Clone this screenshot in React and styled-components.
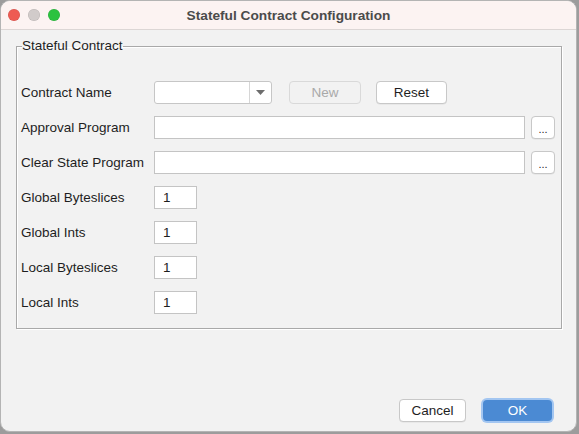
import React from "react";
import styled, { createGlobalStyle } from "styled-components";

const Global = createGlobalStyle`
  html, body {
    margin: 0;
    padding: 0;
    background: #9c9c9c;
    font-family: "Liberation Sans", Arial, sans-serif;
    font-size: 13.5px;
    color: #1e1e1e;
  }
`;

const Window = styled.div`
  width: 577px;
  height: 432px;
  box-sizing: border-box;
  border: 1px solid #b4b4b4;
  border-radius: 10px;
  overflow: hidden;
  background: #f2f2f2;
  display: flex;
  flex-direction: column;
`;

const TitleBar = styled.div`
  height: 28px;
  flex: none;
  background: #fcf3f2;
  border-bottom: 1px solid #dcd6d5;
  display: flex;
  align-items: center;
  position: relative;
  padding-left: 7px;
  gap: 8px;
`;

const Light = styled.span`
  width: 12px;
  height: 12px;
  border-radius: 50%;
  background: ${(p) => p.color};
  box-shadow: inset 0 0 0 0.5px rgba(0, 0, 0, 0.12);
`;

const Title = styled.div`
  position: absolute;
  left: 0;
  right: 0;
  text-align: center;
  font-weight: bold;
  font-size: 13.7px;
  color: #4b4b4b;
  pointer-events: none;
`;

const Content = styled.div`
  flex: 1;
  display: flex;
  flex-direction: column;
  padding: 8px 14px 8px 15px;
`;

const Group = styled.fieldset`
  margin: 0;
  padding: 27px 6px 14px 4px;
  border: 1px solid #a9a9a9;
  box-shadow: 1px 1px 0 #ffffff, inset 1px 1px 0 #ffffff;
  display: flex;
  flex-direction: column;
  gap: 12px;
`;

const Legend = styled.legend`
  padding: 0;
  margin-left: 1px;
  font-size: 13.5px;
  line-height: 16px;
  color: #1e1e1e;
`;

const Row = styled.div`
  display: flex;
  align-items: center;
  height: 23px;
`;

const Label = styled.span`
  width: 133px;
  flex: none;
`;

const Field = styled.div`
  box-sizing: border-box;
  height: 23px;
  width: ${(p) => (p.$w ? `${p.$w}px` : "auto")};
  flex: ${(p) => (p.$w ? "none" : "1")};
  background: #fff;
  border: 1px solid #c4c4c4;
  padding-left: 8px;
  display: flex;
  align-items: center;
`;

const Combo = styled.div`
  box-sizing: border-box;
  width: 118px;
  height: 23px;
  background: #fff;
  border: 1px solid #c6c6c6;
  border-radius: 3px;
  display: flex;
`;

const ComboArrow = styled.div`
  margin-left: auto;
  width: 21px;
  border-left: 1px solid #d6d6d6;
  display: flex;
  align-items: center;
  justify-content: center;
`;

const Button = styled.button`
  box-sizing: border-box;
  height: 23px;
  width: ${(p) => p.$w}px;
  margin-left: ${(p) => p.$ml || 0}px;
  padding: 0;
  font-family: inherit;
  font-size: 13.5px;
  border-radius: 4px;
  border: 1px solid ${(p) => (p.disabled ? "#d9d9d9" : "#c8c8c8")};
  background: ${(p) => (p.disabled ? "#f2f2f2" : "#ffffff")};
  color: ${(p) => (p.disabled ? "#a9a9a9" : "#1e1e1e")};
  box-shadow: ${(p) => (p.disabled ? "none" : "0 0.5px 0 rgba(0,0,0,0.08)")};
`;

const Dots = styled(Button)`
  margin-left: 6px;
  font-size: 11px;
  line-height: 1;
  padding-top: 4px;
`;

const Footer = styled.div`
  margin-top: auto;
  display: flex;
  justify-content: flex-end;
  align-items: center;
  gap: 17px;
  padding-right: 10px;
  padding-bottom: 1px;
`;

const OkButton = styled.button`
  box-sizing: border-box;
  width: 69px;
  height: 21px;
  padding: 0;
  font-family: inherit;
  font-size: 13.5px;
  color: #fff;
  background: #4b8ad3;
  border: none;
  border-radius: 4px;
  box-shadow: 0 0 0 2px #a3c6f1;
`;

const fields = [
  ["Global Byteslices", "1"],
  ["Global Ints", "1"],
  ["Local Byteslices", "1"],
  ["Local Ints", "1"],
];

export default function App() {
  return (
    <>
      <Global />
      <Window>
        <TitleBar>
          <Light color="#ee5b53" />
          <Light color="#d1cbca" />
          <Light color="#2bc23f" />
          <Title>Stateful Contract Configuration</Title>
        </TitleBar>
        <Content>
          <Group>
            <Legend>Stateful Contract</Legend>
            <Row>
              <Label>Contract Name</Label>
              <Combo>
                <ComboArrow>
                  <svg width="9" height="5" viewBox="0 0 9 5">
                    <path d="M0 0h9L4.5 5z" fill="#6d6d6d" />
                  </svg>
                </ComboArrow>
              </Combo>
              <Button $w={72} $ml={17} disabled>
                New
              </Button>
              <Button $w={71} $ml={15}>
                Reset
              </Button>
            </Row>
            <Row>
              <Label>Approval Program</Label>
              <Field />
              <Dots $w={24}>...</Dots>
            </Row>
            <Row>
              <Label>Clear State Program</Label>
              <Field />
              <Dots $w={24}>...</Dots>
            </Row>
            {fields.map(([label, value]) => (
              <Row key={label}>
                <Label>{label}</Label>
                <Field $w={43}>{value}</Field>
              </Row>
            ))}
          </Group>
          <Footer>
            <Button $w={67}>Cancel</Button>
            <OkButton>OK</OkButton>
          </Footer>
        </Content>
      </Window>
    </>
  );
}
